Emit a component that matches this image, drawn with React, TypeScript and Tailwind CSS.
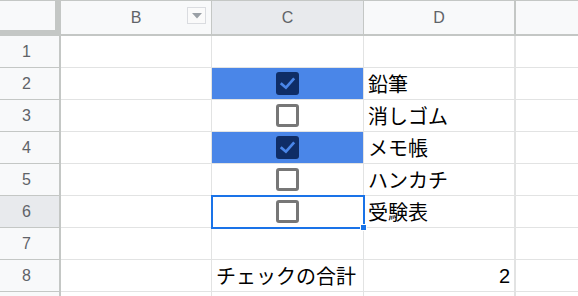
import React from "react";

const rows = [
  { n: 1, c: null as null | boolean, d: "", blue: false },
  { n: 2, c: true, d: "鉛筆", blue: true },
  { n: 3, c: false, d: "消しゴム", blue: false },
  { n: 4, c: true, d: "メモ帳", blue: true },
  { n: 5, c: false, d: "ハンカチ", blue: false },
  { n: 6, c: false, d: "受験表", blue: false },
  { n: 7, c: null, d: "", blue: false },
];

function Checkbox({ checked }: { checked: boolean }) {
  if (checked) {
    return (
      <div className="w-[23px] h-[23px] rounded-[3px] bg-[#0f2d66] flex items-center justify-center">
        <svg width="19" height="19" viewBox="0 0 18 18">
          <polyline points="3.5,9.5 7.5,13 14.5,5" fill="none" stroke="#4a86e8" strokeWidth="2.5" strokeLinecap="square" />
        </svg>
      </div>
    );
  }
  return <div className="w-[23px] h-[23px] rounded-[3px] border-[3px] border-[#777777] bg-white" />;
}

export default function App() {
  const jp = { fontFamily: '"Noto Sans CJK JP", "Noto Sans", sans-serif' };
  const hdr = { fontFamily: '"Liberation Sans", Arial, sans-serif' };
  return (
    <div className="w-[578px] h-[296px] overflow-hidden bg-white relative">
      {/* header row */}
      <div className="flex h-[36px] border-t border-[#c4c7c5]" style={hdr}>
        <div className="w-[61px] h-[35px] shrink-0 bg-[#f8f9fa] relative">
          <div className="absolute right-0 top-0 w-[6px] h-full bg-[#c4c7c5]" />
          <div className="absolute left-0 bottom-0 w-full h-[6px] bg-[#c4c7c5]" />
        </div>
        <div className="w-[151px] h-[35px] shrink-0 bg-[#f8f9fa] border-r border-b-2 border-[#c4c7c5] relative flex items-center justify-center text-[16px] text-[#5f6368]">
          B
          <div className="absolute left-[126px] top-[6px] w-[19px] h-[17px] border border-[#dadce0] bg-[#fafafa] flex items-center justify-center">
            <svg width="10" height="6" viewBox="0 0 10 6">
              <polygon points="0,0 10,0 5,5.5" fill="#9aa0a6" />
            </svg>
          </div>
        </div>
        <div className="w-[152px] h-[35px] shrink-0 bg-[#e8eaed] border-r border-b-2 border-[#c4c7c5] flex items-center justify-center text-[16px] text-[#5f6368]">
          C
        </div>
        <div className="w-[152px] h-[35px] shrink-0 bg-[#f8f9fa] border-r-2 border-b-2 border-[#c4c7c5] flex items-center justify-center text-[16px] text-[#5f6368]">
          D
        </div>
        <div className="flex-1 h-[35px] bg-[#f8f9fa] border-b-2 border-[#c4c7c5]" />
      </div>

      {rows.map((r) => (
        <div key={r.n} className="flex h-[32px]">
          <div
            className={`w-[61px] shrink-0 border-r-2 border-b border-[#c4c7c5] flex items-center justify-center pr-[6px] text-[16px] text-[#5f6368] ${
              r.n === 6 ? "bg-[#e8eaed]" : "bg-[#f8f9fa]"
            }`}
            style={hdr}
          >
            {r.n}
          </div>
          <div className="w-[151px] shrink-0 border-r border-b border-[#e2e3e3]" />
          <div
            className={`w-[152px] shrink-0 border-r border-b border-[#e2e3e3] flex items-center justify-center ${
              r.blue ? "bg-[#4a86e8]" : ""
            }`}
          >
            {r.c !== null && <Checkbox checked={r.c} />}
          </div>
          <div
            className="w-[152px] shrink-0 border-r-2 border-b border-[#e2e3e3] flex items-end pl-[4px] pb-[1px] text-[20px] leading-[28px] text-black"
            style={jp}
          >
            {r.d}
          </div>
          <div className="flex-1 border-b border-[#e2e3e3]" />
        </div>
      ))}

      {/* row 8 */}
      <div className="flex h-[32px]">
        <div className="w-[61px] shrink-0 bg-[#f8f9fa] border-r-2 border-b border-[#c4c7c5] flex items-center justify-center pr-[6px] text-[16px] text-[#5f6368]" style={hdr}>
          8
        </div>
        <div className="w-[151px] shrink-0 border-r border-b border-[#e2e3e3]" />
        <div
          className="w-[152px] shrink-0 border-r border-b border-[#e2e3e3] flex items-end pl-[4px] pb-[1px] text-[20px] leading-[28px] text-black whitespace-nowrap"
          style={jp}
        >
          チェックの合計
        </div>
        <div
          className="w-[152px] shrink-0 border-r-2 border-b border-[#e2e3e3] flex items-end justify-end pr-[4px] pb-[1px] text-[20px] leading-[28px] text-black"
          style={hdr}
        >
          2
        </div>
        <div className="flex-1 border-b border-[#e2e3e3]" />
      </div>

      {/* row 9 partial */}
      <div className="flex h-[32px]">
        <div className="w-[61px] shrink-0 bg-[#f8f9fa] border-r-2 border-[#c4c7c5]" />
        <div className="w-[151px] shrink-0 border-r border-[#e2e3e3]" />
        <div className="w-[152px] shrink-0 border-r border-[#e2e3e3]" />
        <div className="w-[152px] shrink-0 border-r-2 border-[#e2e3e3]" />
      </div>

      {/* selection on C6 */}
      <div className="absolute left-[211px] top-[195px] w-[154px] h-[34px] border-2 border-[#1a73e8] pointer-events-none" />
      <div className="absolute left-[360px] top-[224px] w-[7px] h-[7px] bg-[#1a73e8] border border-white" />
    </div>
  );
}
